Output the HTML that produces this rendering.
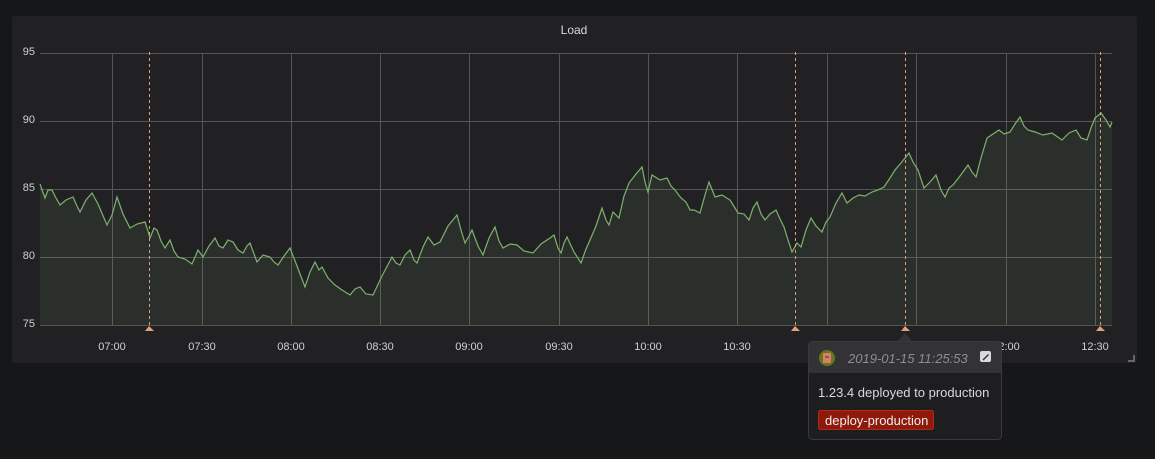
<!DOCTYPE html>
<html><head><meta charset="utf-8"><style>
html,body{margin:0;padding:0;width:1155px;height:459px;overflow:hidden;background:#161719;font-family:"Liberation Sans",sans-serif;}
.panel{position:absolute;left:12px;top:16px;width:1125px;height:347px;background:#212124;border-radius:3px;}
.t{position:absolute;font-size:11px;color:#d0d0d0;}
</style></head><body>
<div class="panel"></div>
<div class="t" style="left:0;width:1148px;top:23px;text-align:center;font-size:12px;color:#d8d9da">Load</div>
<div class="t" style="left:12px;width:23px;top:46px;text-align:right">95</div>
<div class="t" style="left:12px;width:23px;top:114px;text-align:right">90</div>
<div class="t" style="left:12px;width:23px;top:182px;text-align:right">85</div>
<div class="t" style="left:12px;width:23px;top:250px;text-align:right">80</div>
<div class="t" style="left:12px;width:23px;top:318px;text-align:right">75</div>
<svg width="1155" height="459" style="position:absolute;left:0;top:0">
<g stroke="#555" stroke-width="1">
<line x1="40" x2="1112" y1="53.5" y2="53.5"/><line x1="40" x2="1112" y1="121.5" y2="121.5"/><line x1="40" x2="1112" y1="189.5" y2="189.5"/><line x1="40" x2="1112" y1="257.5" y2="257.5"/><line x1="40" x2="1112" y1="325.5" y2="325.5"/>
<line x1="112.5" x2="112.5" y1="53" y2="325"/><line x1="202.5" x2="202.5" y1="53" y2="325"/><line x1="291.5" x2="291.5" y1="53" y2="325"/><line x1="380.5" x2="380.5" y1="53" y2="325"/><line x1="469.5" x2="469.5" y1="53" y2="325"/><line x1="559.5" x2="559.5" y1="53" y2="325"/><line x1="648.5" x2="648.5" y1="53" y2="325"/><line x1="737.5" x2="737.5" y1="53" y2="325"/><line x1="827.5" x2="827.5" y1="53" y2="325"/><line x1="916.5" x2="916.5" y1="53" y2="325"/><line x1="1006.5" x2="1006.5" y1="53" y2="325"/><line x1="1095.5" x2="1095.5" y1="53" y2="325"/>
</g>
<polygon fill="rgba(126,178,109,0.1)" points="40,325 40,184 45,198 48,190 52,190 56,198 60,205 66,200 73,197 77,206 80,212 86,200 92,193 98,204 107,225 112,215 117,197 123,214 130,228 137,224 145,222 148,231 150,238 154,228 157,230 161,241 165,248 170,240 174,251 178,257 185,259 192,264 198,250 203,257 209,246 215,238 219,246 223,248 228,240 233,242 238,250 243,253 247,246 250,243 257,262 263,255 270,257 274,262 278,265 284,256 290,248 297,266 305,287 310,272 315,262 319,270 322,267 328,278 335,285 342,290 350,295 355,289 360,287 366,294 373,295 382,276 392,257 396,263 400,265 405,255 410,250 414,260 417,263 423,247 428,237 434,245 440,242 448,226 457,215 461,230 465,243 469,236 472,230 478,246 483,255 489,238 495,227 499,241 503,248 510,244 517,245 524,251 533,253 541,244 550,238 554,235 558,248 561,253 564,243 567,237 574,252 581,263 586,249 590,240 596,226 602,208 606,220 609,225 613,212 619,218 624,196 629,183 636,174 642,167 645,182 648,192 652,175 660,180 667,178 671,186 675,190 681,198 686,202 690,210 694,210 700,213 705,195 709,182 715,197 722,195 730,200 735,208 738,213 744,214 749,220 753,208 757,202 761,214 765,220 770,214 776,210 780,219 784,227 788,240 792,252 797,243 801,247 806,230 811,218 816,226 822,232 826,222 830,217 836,203 842,193 847,203 853,198 859,195 865,196 872,192 878,190 884,187 890,178 895,170 901,163 905,158 909,153 913,162 918,170 924,188 930,182 936,175 941,190 945,197 949,188 953,185 960,176 968,165 972,172 976,177 981,158 987,138 993,134 999,130 1004,134 1010,132 1015,124 1020,117 1024,126 1028,130 1035,132 1043,135 1052,133 1062,140 1069,133 1076,130 1081,138 1087,140 1091,128 1095,118 1101,113 1106,120 1110,127 1112,122 1112,325"/>
<polyline fill="none" stroke="#7eb26d" stroke-width="1.2" points="40,184 45,198 48,190 52,190 56,198 60,205 66,200 73,197 77,206 80,212 86,200 92,193 98,204 107,225 112,215 117,197 123,214 130,228 137,224 145,222 148,231 150,238 154,228 157,230 161,241 165,248 170,240 174,251 178,257 185,259 192,264 198,250 203,257 209,246 215,238 219,246 223,248 228,240 233,242 238,250 243,253 247,246 250,243 257,262 263,255 270,257 274,262 278,265 284,256 290,248 297,266 305,287 310,272 315,262 319,270 322,267 328,278 335,285 342,290 350,295 355,289 360,287 366,294 373,295 382,276 392,257 396,263 400,265 405,255 410,250 414,260 417,263 423,247 428,237 434,245 440,242 448,226 457,215 461,230 465,243 469,236 472,230 478,246 483,255 489,238 495,227 499,241 503,248 510,244 517,245 524,251 533,253 541,244 550,238 554,235 558,248 561,253 564,243 567,237 574,252 581,263 586,249 590,240 596,226 602,208 606,220 609,225 613,212 619,218 624,196 629,183 636,174 642,167 645,182 648,192 652,175 660,180 667,178 671,186 675,190 681,198 686,202 690,210 694,210 700,213 705,195 709,182 715,197 722,195 730,200 735,208 738,213 744,214 749,220 753,208 757,202 761,214 765,220 770,214 776,210 780,219 784,227 788,240 792,252 797,243 801,247 806,230 811,218 816,226 822,232 826,222 830,217 836,203 842,193 847,203 853,198 859,195 865,196 872,192 878,190 884,187 890,178 895,170 901,163 905,158 909,153 913,162 918,170 924,188 930,182 936,175 941,190 945,197 949,188 953,185 960,176 968,165 972,172 976,177 981,158 987,138 993,134 999,130 1004,134 1010,132 1015,124 1020,117 1024,126 1028,130 1035,132 1043,135 1052,133 1062,140 1069,133 1076,130 1081,138 1087,140 1091,128 1095,118 1101,113 1106,120 1110,127 1112,122"/>
<g stroke="#e0a07a" stroke-width="1" stroke-dasharray="3,3">
<line x1="149.5" x2="149.5" y1="52" y2="326"/><line x1="795.5" x2="795.5" y1="52" y2="326"/><line x1="905.5" x2="905.5" y1="52" y2="326"/><line x1="1100.5" x2="1100.5" y1="52" y2="326"/>
</g>
<g fill="#e0a07a"><polygon points="145,331 149,326 154,331"/><polygon points="791,331 795,326 800,331"/><polygon points="901,331 905,326 910,331"/><polygon points="1096,331 1100,326 1105,331"/></g>
<path d="M1128 361 H1134 V355" stroke="#666" stroke-width="2" fill="none"/>
<g fill="#d0d0d0" font-size="11" text-anchor="middle" font-family="Liberation Sans,sans-serif">
<text x="112" y="350">07:00</text><text x="202" y="350">07:30</text><text x="291" y="350">08:00</text><text x="380" y="350">08:30</text><text x="469" y="350">09:00</text><text x="559" y="350">09:30</text><text x="648" y="350">10:00</text><text x="737" y="350">10:30</text><text x="1006" y="350">12:00</text><text x="1095" y="350">12:30</text>
</g>
<polygon points="898,341 905,333 912,341" fill="#333335"/>
<rect x="808.5" y="341.5" width="193" height="98" rx="4" fill="#1e1e20" stroke="#3a3a3c"/>
<path d="M809 373 V345 a3 3 0 0 1 3 -3 H998 a3 3 0 0 1 3 3 V373 Z" fill="#333335"/>
<circle cx="827" cy="358" r="8" fill="#5f7a1c"/>
<rect x="823" y="353" width="8" height="10" fill="#e27a6a"/>
<rect x="825" y="356" width="4" height="2" fill="#5f7a1c"/>
<text x="848" y="363" font-size="13" font-style="italic" fill="#8e8e8e" font-family="Liberation Sans,sans-serif">2019-01-15 11:25:53</text>
<rect x="980" y="351" width="11" height="11" rx="2" fill="#d8d9da"/>
<path d="M982.5 359.5 L988 354 L989 355 L983.5 360.5 Z" fill="#333"/>
<text x="818" y="397" font-size="13" fill="#d8d9da" font-family="Liberation Sans,sans-serif">1.23.4 deployed to production</text>
<rect x="818.5" y="410.5" width="115" height="19" rx="2" fill="#8f1a0b" stroke="#b02a18"/>
<text x="825" y="425" font-size="13" fill="#eee" font-family="Liberation Sans,sans-serif">deploy-production</text>
</svg>
</body></html>
